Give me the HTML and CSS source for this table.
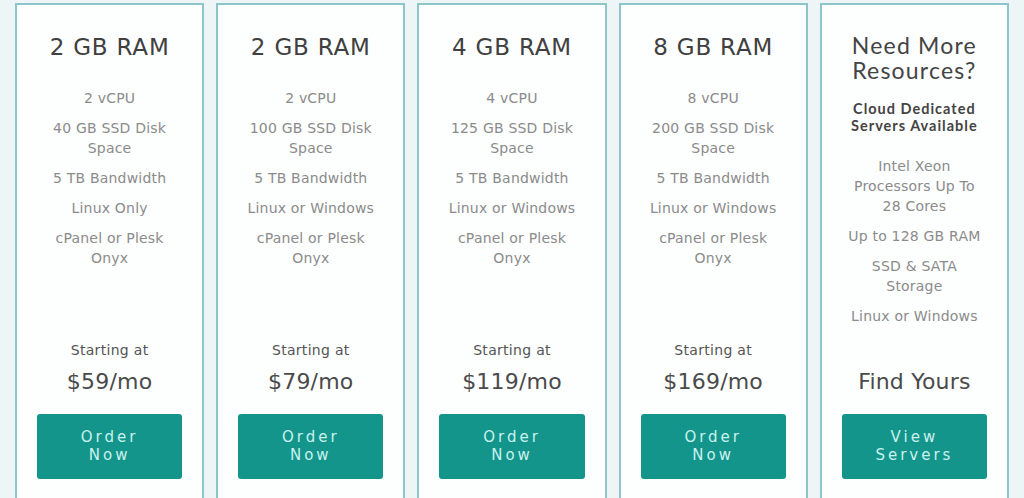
FILE: index.html
```html
<!DOCTYPE html>
<html lang="en">
<head>
<meta charset="utf-8">
<title>Cloud Plans</title>
<link rel="stylesheet" href="styles.css">
</head>
<body>
<div class="plans">
  <div class="plan">
    <h2 class="plan-title">2 GB RAM</h2>
    <ul class="features">
      <li>2 vCPU</li>
      <li>40 GB SSD Disk Space</li>
      <li>5 TB Bandwidth</li>
      <li>Linux Only</li>
      <li>cPanel or Plesk Onyx</li>
    </ul>
    <div class="plan-foot">
      <p class="starting">Starting at</p>
      <p class="price">$59/mo</p>
      <a class="btn" href="#">Order Now</a>
    </div>
  </div>
  <div class="plan">
    <h2 class="plan-title">2 GB RAM</h2>
    <ul class="features">
      <li>2 vCPU</li>
      <li>100 GB SSD Disk Space</li>
      <li>5 TB Bandwidth</li>
      <li>Linux or Windows</li>
      <li>cPanel or Plesk Onyx</li>
    </ul>
    <div class="plan-foot">
      <p class="starting">Starting at</p>
      <p class="price">$79/mo</p>
      <a class="btn" href="#">Order Now</a>
    </div>
  </div>
  <div class="plan">
    <h2 class="plan-title">4 GB RAM</h2>
    <ul class="features">
      <li>4 vCPU</li>
      <li>125 GB SSD Disk Space</li>
      <li>5 TB Bandwidth</li>
      <li>Linux or Windows</li>
      <li>cPanel or Plesk Onyx</li>
    </ul>
    <div class="plan-foot">
      <p class="starting">Starting at</p>
      <p class="price">$119/mo</p>
      <a class="btn" href="#">Order Now</a>
    </div>
  </div>
  <div class="plan">
    <h2 class="plan-title">8 GB RAM</h2>
    <ul class="features">
      <li>8 vCPU</li>
      <li>200 GB SSD Disk Space</li>
      <li>5 TB Bandwidth</li>
      <li>Linux or Windows</li>
      <li>cPanel or Plesk Onyx</li>
    </ul>
    <div class="plan-foot">
      <p class="starting">Starting at</p>
      <p class="price">$169/mo</p>
      <a class="btn" href="#">Order Now</a>
    </div>
  </div>
  <div class="plan">
    <h2 class="plan-title alt">Need More Resources?</h2>
    <p class="subtitle">Cloud Dedicated Servers Available</p>
    <ul class="features tight">
      <li>Intel Xeon Processors Up To 28 Cores</li>
      <li>Up to 128 GB RAM</li>
      <li>SSD &amp; SATA Storage</li>
      <li>Linux or Windows</li>
    </ul>
    <div class="plan-foot">
      <p class="price">Find Yours</p>
      <a class="btn" href="#">View Servers</a>
    </div>
  </div>
</div>
</body>
</html>
```

FILE: styles.css
```css
html, body {
  margin: 0;
  padding: 0;
}
body {
  background: #edf5f7;
  font-family: "DejaVu Sans", "Liberation Sans", sans-serif;
  height: 498px;
  overflow: hidden;
}
.plans {
  display: grid;
  grid-template-columns: repeat(5, 1fr);
  gap: 12px;
  padding: 3px 15px 0 15px;
}
.plan {
  box-sizing: border-box;
  height: 500px;
  background: #fdfefe;
  border: 2px solid #8cc6ca;
  padding: 28px 21px 22px;
  display: flex;
  flex-direction: column;
  text-align: center;
}
.plan-title {
  margin: 0;
  font-size: 23px;
  line-height: 28px;
  font-weight: normal;
  letter-spacing: 0.8px;
  color: #404040;
}
.plan-title.alt {
  font-family: Lato, "DejaVu Sans", sans-serif;
  font-size: 23px;
  line-height: 25px;
  letter-spacing: 1.2px;
  color: #444;
}
.subtitle {
  margin: 17px 0 0;
  font-family: Lato, "DejaVu Sans", sans-serif;
  font-weight: bold;
  font-size: 14.5px;
  line-height: 17px;
  letter-spacing: 1px;
  color: #444;
}
.features {
  list-style: none;
  margin: 27px 0 0;
  padding: 0;
  font-size: 14px;
  line-height: 20px;
  letter-spacing: 0.2px;
  color: #8b8b8b;
}
.features.tight {
  margin-top: 22px;
}
.features li {
  margin-bottom: 10px;
}
.plan-foot {
  margin-top: auto;
}
.starting {
  margin: 0;
  font-size: 14px;
  line-height: 20px;
  letter-spacing: 0.3px;
  color: #555;
}
.price {
  margin: 7px 0 0;
  font-size: 22px;
  line-height: 30px;
  letter-spacing: 0.2px;
  color: #4a4a4a;
}
.btn {
  display: block;
  margin: 17px -1px 0;
  padding: 14px 26px 15px;
  background: #14958b;
  border-radius: 3px;
  color: #c9f1ed;
  text-decoration: none;
  font-size: 15px;
  line-height: 18px;
  letter-spacing: 3px;
}
```
